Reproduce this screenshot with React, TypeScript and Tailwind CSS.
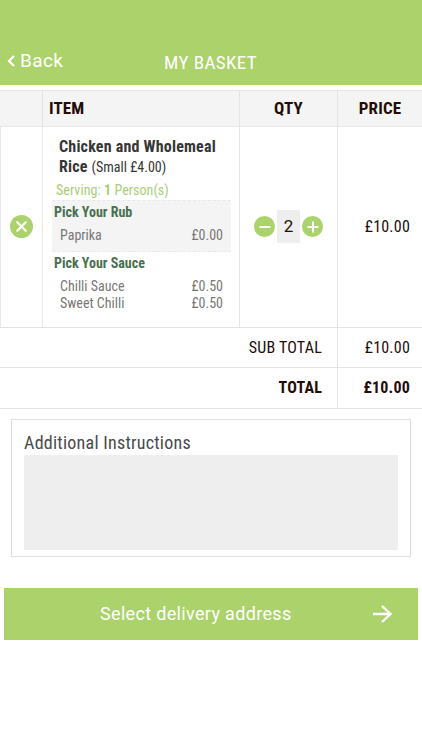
import type React from "react";
import { X, Minus, Plus } from "lucide-react";

interface Extra {
    name: string;
    price: string;
}

interface ExtraGroupProps {
    title: string;
    extras: Extra[];
    highlighted?: boolean;
}

const RUBS: Extra[] = [{ name: "Paprika", price: "£0.00" }];

const SAUCES: Extra[] = [
    { name: "Chilli Sauce", price: "£0.50" },
    { name: "Sweet Chilli", price: "£0.50" },
];

const App: React.FC = () => {
    return (
        <main className="min-h-[750px] w-[422px] overflow-hidden bg-white font-['Roboto',sans-serif]">
            <Header />
            <BasketTable />
            <Instructions />
            <button className="mt-[31px] ml-1 flex h-[52px] w-[414px] items-center bg-[#acd26c] text-white">
                <span className="ml-[96px] w-[192px] pb-px text-left text-[18px] tracking-[0.33px] whitespace-nowrap">
                    Select delivery address
                </span>
                <ArrowIcon />
            </button>
        </main>
    );
};

const Header = () => (
    <header className="flex h-[85px] items-start bg-[#acd26c] text-white">
        <button className="mt-[49px] ml-[7px] flex h-6 w-[157px] items-center">
            <svg width="8" height="12" viewBox="0 0 8 12" fill="none" stroke="currentColor" strokeWidth="2.2">
                <path d="M7 1 2 6l5 5" />
            </svg>
            <span className="ml-[5px] text-[19px] tracking-[0.4px]">Back</span>
        </button>
        <h1 className="mt-[51px] text-[19px] leading-6 tracking-[0.4px] font-stretch-[75%]">MY BASKET</h1>
    </header>
);

const BasketTable = () => (
    <section className="mt-[5px] text-[16px] text-[#240d08] font-stretch-[75%]">
        <div className="grid h-[37px] grid-cols-[43px_197px_98px_84px] border-y border-[#e7e7e7] bg-[#f4f4f4] text-[17px] leading-[34px] font-bold tracking-[0.15px]">
            <div className="border-r border-[#e4e4e4]" />
            <div className="border-r border-[#e4e4e4] pl-[6px]">ITEM</div>
            <div className="border-r border-[#e4e4e4] text-center">QTY</div>
            <div className="text-center">PRICE</div>
        </div>
        <div className="grid h-[201px] grid-cols-[43px_197px_98px_84px] border-b border-[#e4e4e4]">
            <div className="flex items-center justify-center border-x border-[#e9e9e9] pb-[2px]">
                <button className="flex size-[23px] items-center justify-center rounded-full bg-[#acd26c] text-white">
                    <X size={17} strokeWidth={3.2} />
                </button>
            </div>
            <div className="border-r border-[#e4e4e4] pt-[10px] pr-2 pl-[9px]">
                <p className="pl-[7px] text-[16px] leading-5 font-bold tracking-[0.2px] text-[#353636]">
                    Chicken and Wholemeal
                    <br />
                    Rice <span className="text-[14px] font-normal tracking-normal">(Small £4.00)</span>
                </p>
                <p className="mt-[3px] pl-1 text-[14px] leading-5 tracking-[0.05px] text-[#aace75]">
                    Serving: <b>1</b> Person(s)
                </p>
                <ExtraGroup title="Pick Your Rub" extras={RUBS} highlighted />
                <ExtraGroup title="Pick Your Sauce" extras={SAUCES} />
            </div>
            <div className="flex items-center justify-center gap-[2px] border-r border-[#e4e4e4] pb-px">
                <button className="flex size-[21px] items-center justify-center rounded-full bg-[#acd26c] text-white">
                    <Minus size={16} strokeWidth={3} />
                </button>
                <span className="flex h-[33px] w-[23px] items-center justify-center bg-[#eeeeee] text-[17px] font-stretch-[100%]">2</span>
                <button className="flex size-[21px] items-center justify-center rounded-full bg-[#acd26c] text-white">
                    <Plus size={16} strokeWidth={3} />
                </button>
            </div>
            <div className="flex items-center justify-end pr-3 tracking-[0.2px]">£10.00</div>
        </div>
        <TotalRow label="SUB TOTAL" amount="£10.00" />
        <TotalRow label="TOTAL" amount="£10.00" bold />
    </section>
);

const ExtraGroup: React.FC<ExtraGroupProps> = ({ title, extras, highlighted }) => (
    <div className={highlighted ? "h-[52px] border-y border-dashed border-[#e9e9e9] bg-[#f4f4f4]" : ""}>
        <h3 className="pt-px pl-[2px] text-[14px] leading-5 font-bold text-[#48704f]">{title}</h3>
        <ul className="pt-[5px] pr-2 pl-2 text-[14px] leading-[17px] text-[#777]">
            {extras.map(({ name, price }) => (
                <li key={name} className="flex justify-between">
                    <span>{name}</span>
                    <span>{price}</span>
                </li>
            ))}
        </ul>
    </div>
);

const TotalRow = ({ label, amount, bold }: { label: string; amount: string; bold?: boolean }) => (
    <div
        className={`grid grid-cols-[338px_84px] border-b border-[#e4e4e4] text-right leading-[39px] tracking-[0.2px] ${
            bold ? "h-[41px] font-bold" : "h-10"
        }`}
    >
        <div className="border-r border-[#e4e4e4] pr-[15px]">{label}</div>
        <div className="pr-3">{amount}</div>
    </div>
);

const Instructions = () => (
    <section className="mt-[10px] ml-[11px] h-[138px] w-[400px] border border-[#dddddd] pt-[11px] pl-3">
        <label htmlFor="instructions" className="block h-6 text-[18px] leading-[23px] tracking-[0.25px] text-[#4a4a4a] font-stretch-[75%]">
            Additional Instructions
        </label>
        <textarea id="instructions" className="block h-[95px] w-[374px] resize-none bg-[#eeeeee]" />
    </section>
);

const ArrowIcon = () => (
    <svg className="ml-[81px]" width="20" height="18" viewBox="0 0 20 18" fill="none" stroke="currentColor" strokeWidth="2.4">
        <path d="M0 9h18M9 1l8.5 8L9 17" />
    </svg>
);

export default App;
